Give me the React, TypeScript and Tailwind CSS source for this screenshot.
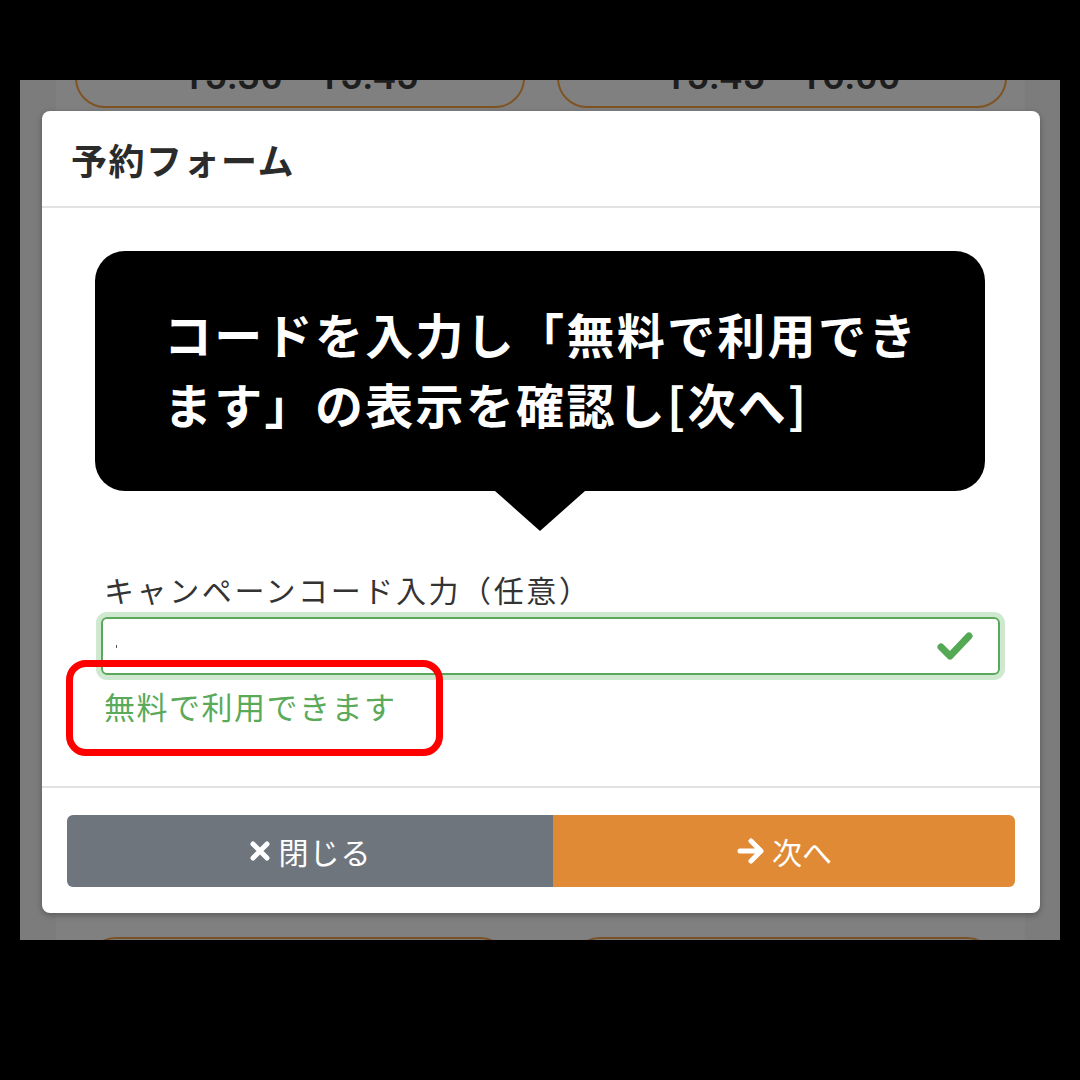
import React from 'react';

const jp = { fontFamily: '"Noto Sans CJK JP", "Noto Sans", sans-serif' };

const slotsTop = [
  { from: '15:30', to: '15:45' },
  { from: '15:45', to: '16:00' },
];

const CheckIcon = () => (
  <svg width="38" height="32" viewBox="0 0 38 32" fill="none">
    <path d="M5 17 L14 26 L33 6" stroke="#55a955" strokeWidth="7" strokeLinecap="round" strokeLinejoin="round" />
  </svg>
);

const XIcon = () => (
  <svg width="22" height="22" viewBox="0 0 22 22" fill="none">
    <path d="M4 4 L18 18 M18 4 L4 18" stroke="white" strokeWidth="5" strokeLinecap="round" />
  </svg>
);

const ArrowIcon = () => (
  <svg width="30" height="26" viewBox="0 0 30 26" fill="none">
    <path d="M4 13 H25 M15 3 L25 13 L15 23" stroke="white" strokeWidth="5" strokeLinecap="round" strokeLinejoin="round" />
  </svg>
);

export default function App() {
  return (
    <div className="w-[1080px] h-[1080px] bg-black pt-[80px] px-[20px]" style={jp}>
      {/* page behind the modal, dimmed by the backdrop */}
      <div className="relative h-[860px] bg-[#7c7c7c] overflow-hidden">
        <div className="mx-[36px] mr-[35px] h-full bg-[#808080] flex flex-col justify-between">
          <div className="flex gap-[32px] pl-[19px] -mt-[72px]">
            {slotsTop.map((s, i) => (
              <div
                key={i}
                className="w-[450px] h-[100px] rounded-[30px] border-2 border-[#7f5322] flex items-end justify-center gap-[34px] pb-[10px] text-[40px] leading-none font-medium text-[#1e1e1e]"
                style={{ fontFamily: 'Roboto, "Liberation Sans", sans-serif' }}
              >
                <span>{s.from}</span>
                <span>{s.to}</span>
              </div>
            ))}
          </div>
          <div className="flex gap-[60px] pl-[30px] -mb-[80px]">
            <div className="w-[424px] h-[83px] rounded-[30px] border-2 border-[#7a5124]" />
            <div className="w-[427px] h-[83px] rounded-[30px] border-2 border-[#7a5124]" />
          </div>
        </div>

        {/* modal */}
        <div className="absolute left-[22px] top-[31px] w-[998px] h-[802px] bg-white rounded-[8px] flex flex-col shadow-[0_2px_6px_rgba(0,0,0,0.3)]">
          <div className="h-[97px] border-b-2 border-[#e2e2e2] flex items-center pl-[29px]">
            <h2 className="text-[36px] font-bold text-[#2b2b2b] tracking-[1.5px]">予約フォーム</h2>
          </div>

          <div className="relative flex-1 pt-[43px] pl-[59px] pr-[40px]">
            {/* instruction callout */}
            <div className="-ml-[6px] w-[890px] flex flex-col items-center">
              <div className="w-full h-[240px] bg-black rounded-[30px] flex flex-col justify-center pl-[69px] pb-[6px]">
                <p className="text-white font-bold text-[48px] leading-[70px] tracking-[2.3px]">
                  コードを入力し「無料で利用でき
                  <br />
                  ます」の表示を確認し[次へ]
                </p>
              </div>
              <div className="w-0 h-0 border-l-[45px] border-r-[45px] border-t-[40px] border-l-transparent border-r-transparent border-t-black" />
            </div>

            <label className="block mt-[38px] ml-[3px] text-[30px] leading-[40px] tracking-[2.6px] text-[#333]">
              キャンペーンコード入力（任意）
            </label>
            <div className="mt-[8px] h-[58px] rounded-[6px] border-2 border-[#5aa85a] shadow-[0_0_0_5px_#cfe9d1] flex items-center justify-between pl-[13px] pr-[24px]">
              <span className="w-[1px] h-[3px] bg-[#555]" />
              <CheckIcon />
            </div>
            <p className="mt-[10px] ml-[3px] text-[31px] leading-[42px] tracking-[1.5px] text-[#5aaa5a]">
              無料で利用できます
            </p>

            {/* highlight frame */}
            <div className="absolute left-[24px] top-[452px] w-[377px] h-[96px] rounded-[20px] border-[7px] border-[#ff0000]" />
          </div>

          <div className="h-[127px] border-t-2 border-[#e2e2e2] px-[25px] pt-[27px]">
            <div className="flex h-[72px]">
              <button className="flex-1 rounded-l-[6px] bg-[#6e757d] text-white text-[30px] tracking-[1px] flex items-center justify-center gap-[8px]">
                <XIcon />
                <span>閉じる</span>
              </button>
              <button className="w-[462px] rounded-r-[6px] bg-[#e08a35] text-white text-[30px] flex items-center justify-center gap-[6px]">
                <ArrowIcon />
                <span>次へ</span>
              </button>
            </div>
          </div>
        </div>
      </div>
    </div>
  );
}
